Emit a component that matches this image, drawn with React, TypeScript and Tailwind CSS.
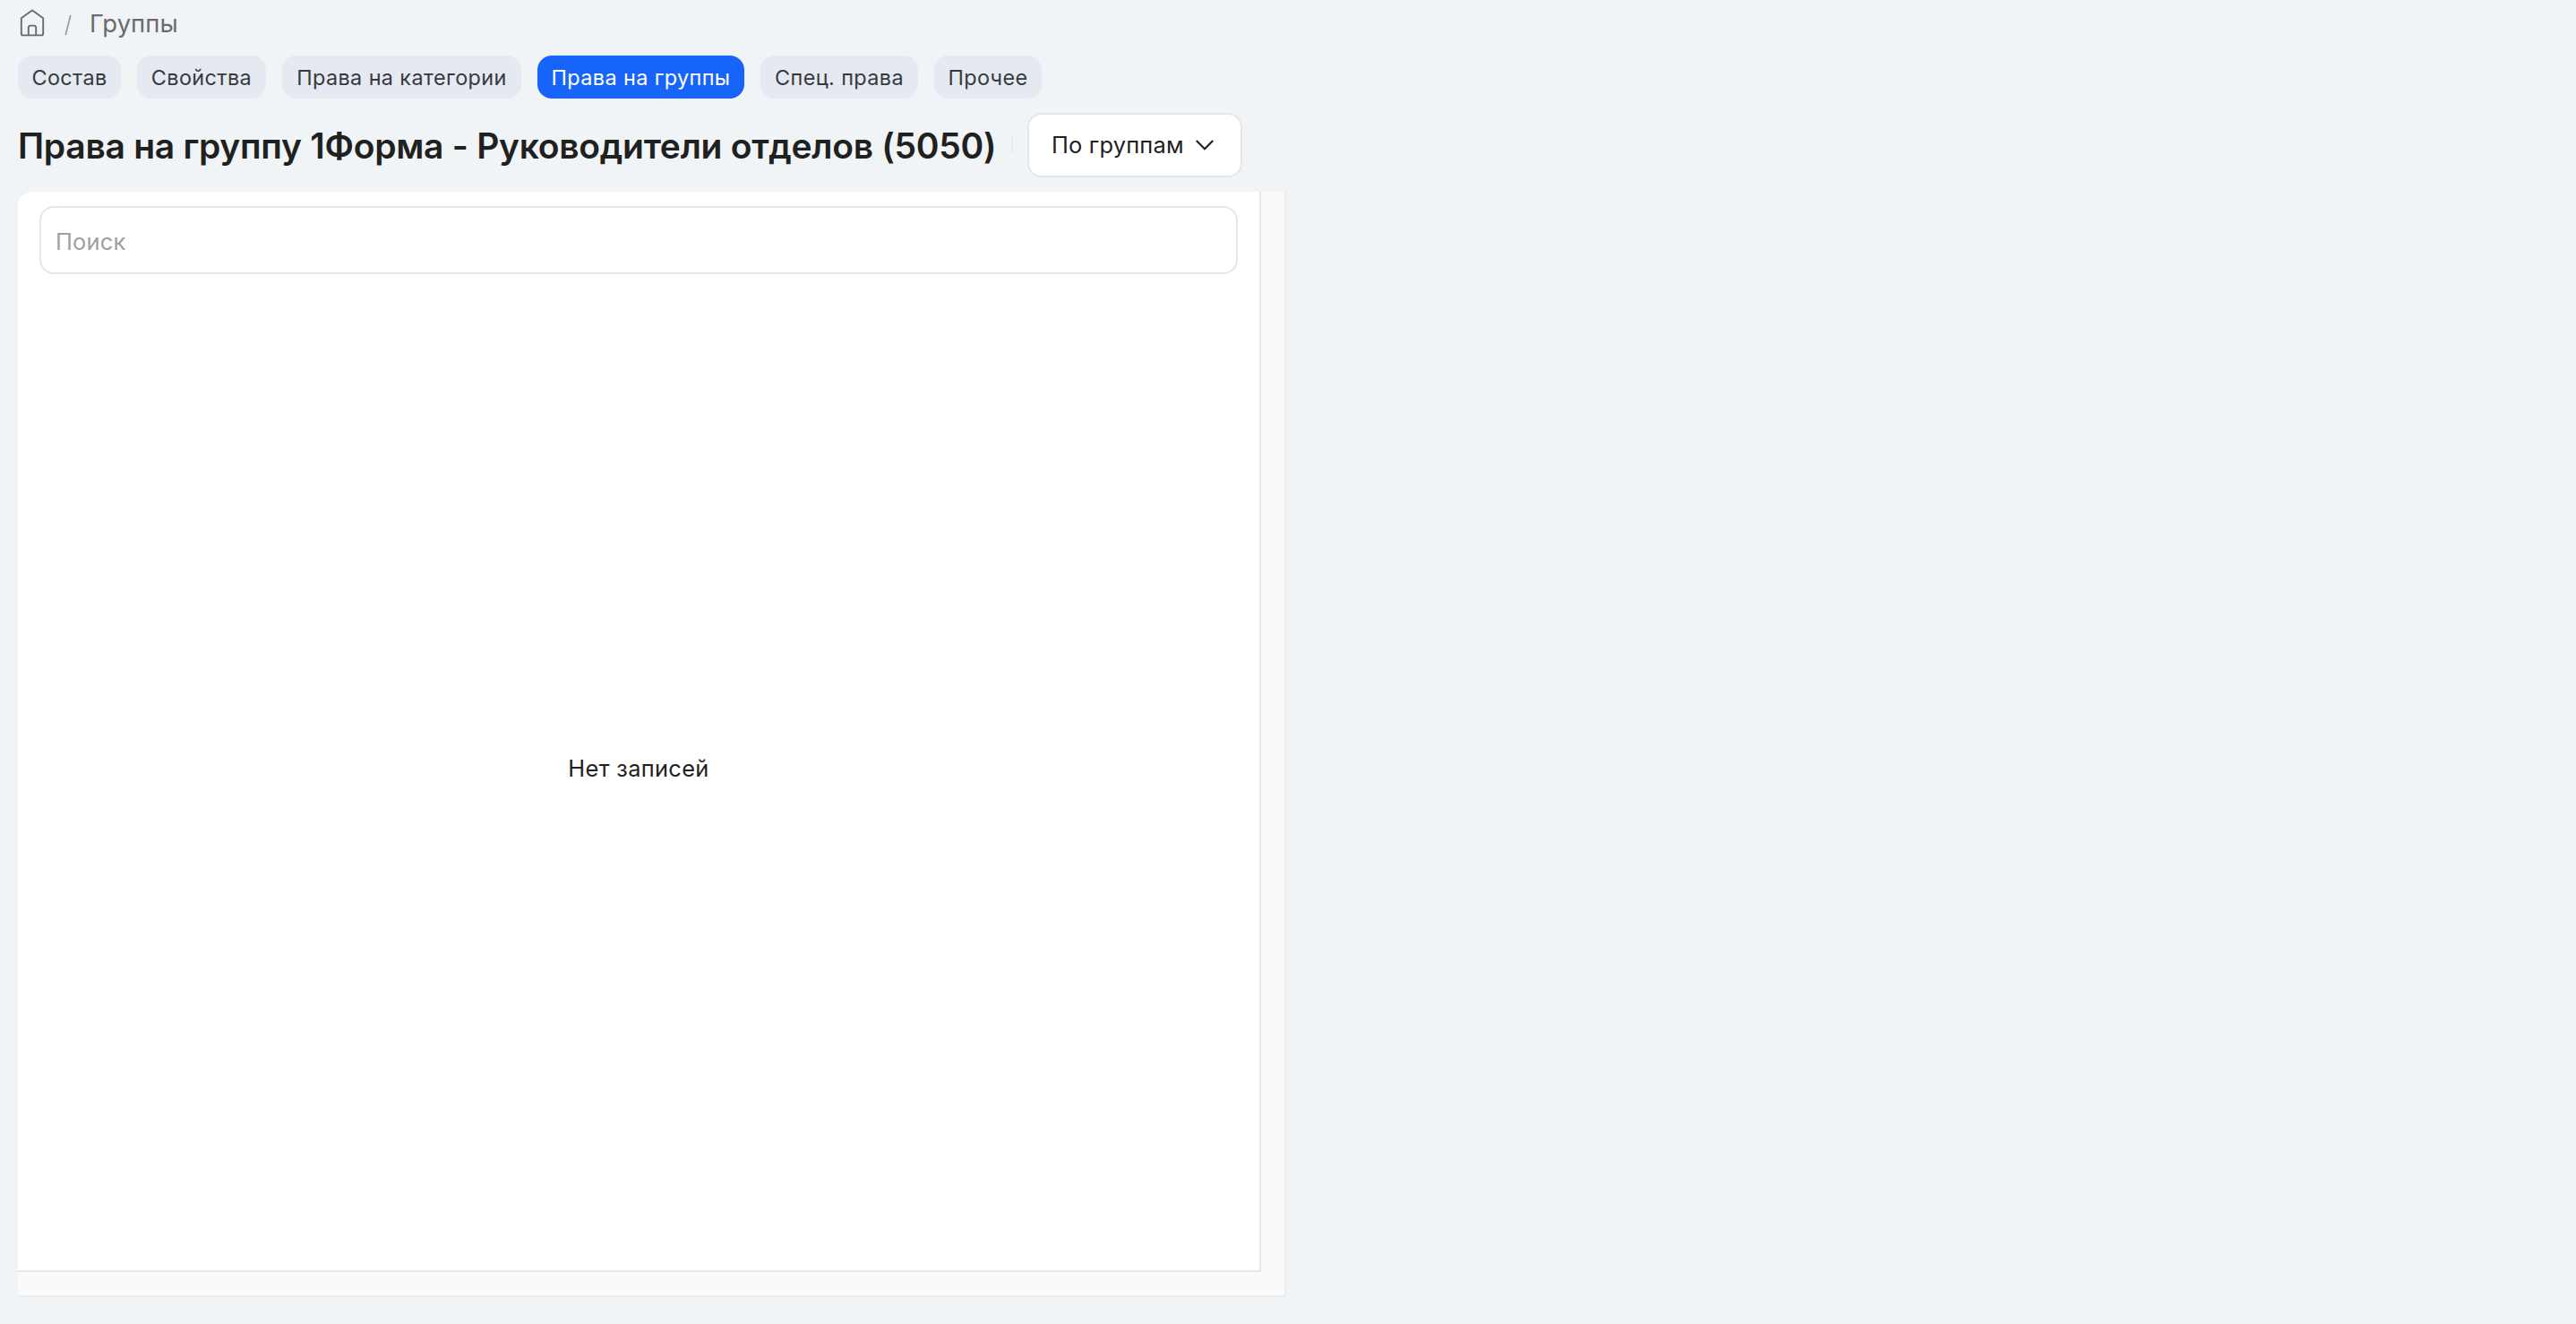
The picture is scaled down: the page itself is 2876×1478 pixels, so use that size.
import React, { useState } from 'react';

interface Tab {
  id: string;
  label: string;
  width: string;
}

const tabs: Tab[] = [
  { id: 'members', label: 'Состав', width: 'w-[115px]' },
  { id: 'props', label: 'Свойства', width: 'w-[144px]' },
  { id: 'categories', label: 'Права на категории', width: 'w-[267px]' },
  { id: 'groups', label: 'Права на группы', width: 'w-[231px]' },
  { id: 'special', label: 'Спец. права', width: 'w-[176px]' },
  { id: 'other', label: 'Прочее', width: 'w-[120px]' },
];

const HomeIcon = () => (
  <svg className="w-8 h-8" viewBox="0 0 32 32" fill="none" stroke="currentColor" strokeWidth="1.9" strokeLinejoin="round">
    <path d="M16 1.5 28.2 10.3V27.4a2 2 0 0 1-2 2H5.8a2 2 0 0 1-2-2V10.3Z" />
    <path d="M11.8 29.4V20.8a2.2 2.2 0 0 1 2.2-2.2h4a2.2 2.2 0 0 1 2.2 2.2v8.6" />
  </svg>
);

const ChevronIcon = () => (
  <svg className="w-5 h-3 shrink-0" viewBox="0 0 20 12" fill="none" stroke="currentColor" strokeWidth="2.2">
    <path d="M0.8 1 10 10.2 19.2 1" />
  </svg>
);

const App = () => {
  const [activeTab, setActiveTab] = useState('groups');
  const [search, setSearch] = useState('');

  return (
    <div className="h-screen overflow-hidden bg-[#f0f4f7] font-['Inter',sans-serif] text-[#1f2121]">
      <nav className="flex items-center h-[62px] pl-5 pb-2.5 text-[#6b6b6b]">
        <a href="#" className="block">
          <HomeIcon />
        </a>
        <svg className="ml-5 mt-1 w-2 h-6 text-[#9a9b9c]" viewBox="0 0 8 24" fill="none" stroke="currentColor" strokeWidth="1.7">
          <path d="M1.2 23 6.8 1" />
        </svg>
        <span className="ml-5 text-[27.4px] leading-8 tracking-[0.05px]">Группы</span>
      </nav>

      <div className="flex gap-[18px] pl-5">
        {tabs.map((tab) => (
          <button
            key={tab.id}
            className={`${tab.width} h-12 pt-0.5 shrink-0 rounded-2xl text-[23.4px] tracking-[0.4px] whitespace-nowrap ${
              tab.id === activeTab ? 'bg-[#1764fb] text-white' : 'bg-[#e5e9f1] text-[#373a3d]'
            }`}
            onClick={() => setActiveTab(tab.id)}
          >
            {tab.label}
          </button>
        ))}
      </div>

      <div className="flex items-center mt-4 h-[72px] pl-5">
        <h1 className="w-[1109px] pt-0.5 text-[39px] leading-[48px] tracking-[-0.27px] font-semibold whitespace-nowrap">
          Права на группу 1Форма - Руководители отделов (5050)
        </h1>
        <div className="w-0.5 h-[18px] bg-[#ebebeb]" />
        <button className="ml-4 flex items-center w-60 h-[72px] pl-[25px] rounded-2xl border-2 border-[#e6e6e6] bg-white text-[25.4px] tracking-[0.2px] whitespace-nowrap">
          <span className="w-[161px] text-left">По группам</span>
          <ChevronIcon />
        </button>
      </div>

      <div className="ml-5 mt-4 w-[1416px] h-[1234px] pr-[26px] pb-[26px] rounded-tl-2xl border-r-2 border-b-2 border-[#ececec] bg-[#fafafa]">
        <div className="flex flex-col h-full px-6 pt-4 rounded-tl-2xl border-r-2 border-b-2 border-[#e6e6e6] bg-white">
          <input
            type="text"
            placeholder="Поиск"
            className="w-[1338px] h-[76px] px-4 pt-0.5 rounded-2xl border-2 border-[#e6e6e6] text-[25.4px] tracking-[0.2px] placeholder-[#a0a0a0] outline-none"
            value={search}
            onChange={(e) => setSearch(e.target.value)}
          />
          <div className="flex-1 flex items-center justify-center pb-2 text-[25.4px] tracking-[0.33px]">Нет записей</div>
        </div>
      </div>
    </div>
  );
};

export default App;
